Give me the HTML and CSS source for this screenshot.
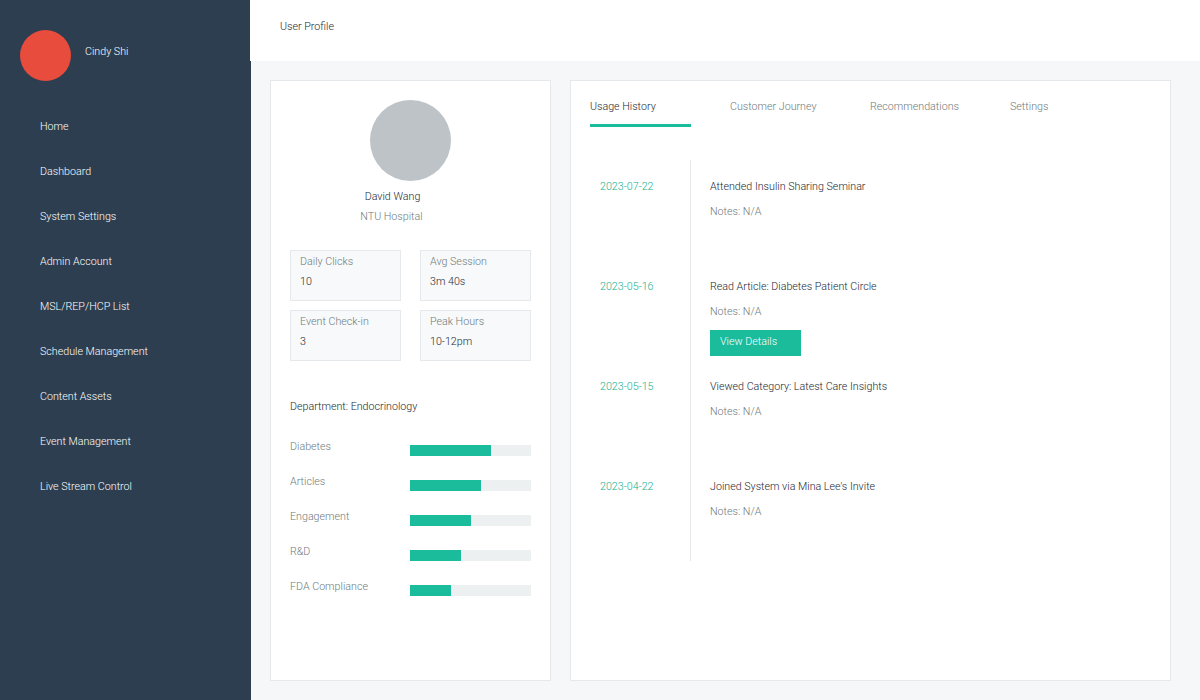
FILE: index.html
```html
<!DOCTYPE html>
<html lang="en">
<head>
    <meta charset="UTF-8">
    <title>User Profile</title>
    <link rel="stylesheet" href="styles.css">
</head>
<body>
    <div class="page">
        <aside class="sidebar">
            <div class="user">
                <div class="user-avatar"></div>
                <div class="user-name">Cindy Shi</div>
            </div>
            <nav class="nav">
                <a href="#">Home</a>
                <a href="#">Dashboard</a>
                <a href="#">System Settings</a>
                <a href="#">Admin Account</a>
                <a href="#">MSL/REP/HCP List</a>
                <a href="#">Schedule Management</a>
                <a href="#">Content Assets</a>
                <a href="#">Event Management</a>
                <a href="#">Live Stream Control</a>
            </nav>
        </aside>
        <div class="main">
            <header class="topbar">User Profile</header>
            <div class="content">
                <section class="card profile">
                    <div class="profile-avatar"></div>
                    <div class="profile-name">David Wang</div>
                    <div class="profile-org">NTU Hospital</div>
                    <div class="stats">
                        <div class="stat"><div class="stat-label">Daily Clicks</div><div class="stat-value">10</div></div>
                        <div class="stat"><div class="stat-label">Avg Session</div><div class="stat-value">3m 40s</div></div>
                        <div class="stat"><div class="stat-label">Event Check-in</div><div class="stat-value">3</div></div>
                        <div class="stat"><div class="stat-label">Peak Hours</div><div class="stat-value">10-12pm</div></div>
                    </div>
                    <div class="department">Department: Endocrinology</div>
                    <div class="bars">
                        <div class="bar-row"><span class="bar-label">Diabetes</span><div class="bar"><div class="bar-fill" style="width: 81px"></div></div></div>
                        <div class="bar-row"><span class="bar-label">Articles</span><div class="bar"><div class="bar-fill" style="width: 71px"></div></div></div>
                        <div class="bar-row"><span class="bar-label">Engagement</span><div class="bar"><div class="bar-fill" style="width: 61px"></div></div></div>
                        <div class="bar-row"><span class="bar-label">R&amp;D</span><div class="bar"><div class="bar-fill" style="width: 51px"></div></div></div>
                        <div class="bar-row"><span class="bar-label">FDA Compliance</span><div class="bar"><div class="bar-fill" style="width: 41px"></div></div></div>
                    </div>
                </section>
                <section class="card history">
                    <div class="tabs">
                        <div class="tab active">Usage History</div>
                        <div class="tab">Customer Journey</div>
                        <div class="tab">Recommendations</div>
                        <div class="tab">Settings</div>
                    </div>
                    <div class="timeline">
                        <div class="event">
                            <div class="event-date">2023-07-22</div>
                            <div class="event-body">
                                <div class="event-title">Attended Insulin Sharing Seminar</div>
                                <div class="event-notes">Notes: N/A</div>
                            </div>
                        </div>
                        <div class="event">
                            <div class="event-date">2023-05-16</div>
                            <div class="event-body">
                                <div class="event-title">Read Article: Diabetes Patient Circle</div>
                                <div class="event-notes">Notes: N/A</div>
                                <a href="#" class="event-btn">View Details</a>
                            </div>
                        </div>
                        <div class="event">
                            <div class="event-date">2023-05-15</div>
                            <div class="event-body">
                                <div class="event-title">Viewed Category: Latest Care Insights</div>
                                <div class="event-notes">Notes: N/A</div>
                            </div>
                        </div>
                        <div class="event">
                            <div class="event-date">2023-04-22</div>
                            <div class="event-body">
                                <div class="event-title">Joined System via Mina Lee's Invite</div>
                                <div class="event-notes">Notes: N/A</div>
                            </div>
                        </div>
                    </div>
                </section>
            </div>
        </div>
    </div>
</body>
</html>
```

FILE: styles.css
```css
* {
    box-sizing: border-box;
}
body {
    margin: 0;
    background: #f5f7f9;
    font-family: Roboto, "Liberation Sans", sans-serif;
    font-size: 10.7px;
    font-weight: 300;
    line-height: 14px;
    color: #1c2833;
}
a {
    text-decoration: none;
}
.page {
    display: flex;
    width: 1200px;
    height: 700px;
    overflow: hidden;
}
.sidebar {
    width: 251px;
    flex-shrink: 0;
    background: #2c3e50;
    color: #fff;
}
.user {
    display: flex;
    padding: 30px 0 0 20px;
    height: 120px;
}
.user-avatar {
    width: 51px;
    height: 51px;
    border-radius: 50%;
    background: #e74c3c;
}
.user-name {
    margin: 15px 0 0 14px;
}
.nav {
    display: flex;
    flex-direction: column;
    gap: 31px;
    padding-left: 40px;
}
.nav a {
    color: #fff;
}
.main {
    flex: 1;
    min-width: 0;
}
.topbar {
    height: 61px;
    margin-left: -1px;
    background: #fff;
    padding: 20px 0 0 30px;
}
.content {
    display: flex;
    gap: 19px;
    padding: 19px 0 0 19px;
}
.card {
    height: 601px;
    background: #fff;
    border: 1px solid #e6e9ec;
}
.profile {
    width: 281px;
    padding: 19px 19px 0;
}
.profile-avatar {
    width: 81px;
    height: 81px;
    margin: 0 auto;
    border-radius: 50%;
    background: #bdc3c7;
}
.profile-name {
    margin-top: 9px;
    padding-right: 36px;
    text-align: center;
}
.profile-org {
    margin-top: 6px;
    padding-right: 38px;
    text-align: center;
    color: #6f7b7c;
}
.stats {
    display: grid;
    grid-template-columns: 111px 111px;
    grid-auto-rows: 51px;
    gap: 9px 19px;
    margin-top: 26px;
}
.stat {
    padding: 4px 9px;
    background: #f8f9fa;
    border: 1px solid #e6e9ec;
}
.stat-label {
    color: #6f7b7c;
}
.stat-value {
    margin-top: 6px;
}
.department {
    margin-top: 39px;
}
.bars {
    display: flex;
    flex-direction: column;
    gap: 21px;
    margin-top: 26px;
}
.bar-row {
    display: flex;
    height: 14px;
}
.bar-label {
    width: 120px;
    color: #6f7b7c;
}
.bar {
    width: 121px;
    height: 11px;
    margin-top: 5px;
    background: #ecf0f1;
}
.bar-fill {
    height: 100%;
    background: #1abc9c;
}
.history {
    width: 601px;
    padding: 0 19px;
}
.tabs {
    display: flex;
    gap: 39px;
    height: 79px;
}
.tab {
    width: 101px;
    height: 46px;
    padding-top: 19px;
    color: #6f7b7c;
}
.tab.active {
    color: #1c2833;
    border-bottom: 3px solid #1abc9c;
}
.timeline {
    position: relative;
    height: 401px;
}
.timeline::before {
    content: "";
    position: absolute;
    left: 100px;
    top: 0;
    bottom: 0;
    width: 1px;
    background: #e6e9ec;
}
.event {
    display: flex;
    height: 100px;
    padding: 20px 0 0 10px;
}
.event-date {
    width: 110px;
    color: #14b08f;
}
.event-notes {
    margin-top: 11px;
    color: #6f7b7c;
}
.event-btn {
    display: block;
    width: 91px;
    height: 26px;
    margin-top: 11px;
    padding: 5px 10px;
    background: #1abc9c;
    color: #fff;
}
```
